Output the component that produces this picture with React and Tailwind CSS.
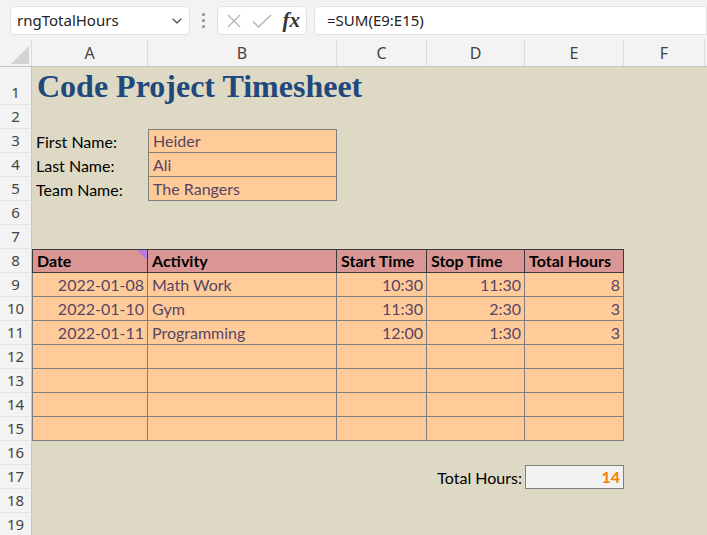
import React from "react";
import { ChevronDown } from "lucide-react";

const cellFont = { fontFamily: "Lato, 'Noto Sans', sans-serif" };

const inputCls = "bg-[#ffcc99] text-[#574563] border-r border-b border-[#7f7f7f]";
const headCls = "bg-[#da9694] text-black font-bold border-r border-b border-t border-[#3a3a3a]";

const widths = ["w-[116px]", "w-[189px]", "w-[90px]", "w-[98px]", "w-[99px]", "w-[81px]"];

// each row: [number, heightClass, cells(6)] ; cell = { t, cls, align }
const blank = () => ({});
const tableRow = (vals) => [
    { t: vals[0], cls: `${inputCls} border-l`, align: "r" },
    { t: vals[1], cls: inputCls },
    { t: vals[2], cls: inputCls, align: "r" },
    { t: vals[3], cls: inputCls, align: "r" },
    { t: vals[4], cls: inputCls, align: "r" },
    blank(),
];

const rows = [
    [1, "h-[38px]", [{ title: true }, blank(), blank(), blank(), blank(), blank()]],
    [2, "h-[24px]", [blank(), blank(), blank(), blank(), blank(), blank()]],
    [3, "h-[24px]", [{ t: "First Name:" }, { t: "Heider", cls: `${inputCls} border-l border-t` }, blank(), blank(), blank(), blank()]],
    [4, "h-[24px]", [{ t: "Last Name:" }, { t: "Ali", cls: `${inputCls} border-l` }, blank(), blank(), blank(), blank()]],
    [5, "h-[24px]", [{ t: "Team Name:" }, { t: "The Rangers", cls: `${inputCls} border-l` }, blank(), blank(), blank(), blank()]],
    [6, "h-[24px]", [blank(), blank(), blank(), blank(), blank(), blank()]],
    [7, "h-[24px]", [blank(), blank(), blank(), blank(), blank(), blank()]],
    [8, "h-[24px]", [
        { t: "Date", cls: `${headCls} border-l`, marker: true },
        { t: "Activity", cls: headCls },
        { t: "Start Time", cls: headCls },
        { t: "Stop Time", cls: headCls },
        { t: "Total Hours", cls: headCls },
        blank(),
    ]],
    [9, "h-[24px]", tableRow(["2022-01-08", "Math Work", "10:30", "11:30", "8"])],
    [10, "h-[24px]", tableRow(["2022-01-10", "Gym", "11:30", "2:30", "3"])],
    [11, "h-[24px]", tableRow(["2022-01-11", "Programming", "12:00", "1:30", "3"])],
    [12, "h-[24px]", tableRow(["", "", "", "", ""])],
    [13, "h-[24px]", tableRow(["", "", "", "", ""])],
    [14, "h-[24px]", tableRow(["", "", "", "", ""])],
    [15, "h-[24px]", tableRow(["", "", "", "", ""])],
    [16, "h-[24px]", [blank(), blank(), blank(), blank(), blank(), blank()]],
    [17, "h-[24px]", [
        blank(), blank(), blank(),
        { t: "Total Hours:", align: "r" },
        { t: "14", cls: "bg-[#f2f2f2] text-[#fa7d00] font-bold border border-[#7f7f7f]", align: "r" },
        blank(),
    ]],
    [18, "h-[24px]", [blank(), blank(), blank(), blank(), blank(), blank()]],
    [19, "h-[24px]", [blank(), blank(), blank(), blank(), blank(), blank()]],
];

const FormulaBar = () => (
    <div className="h-[39px] bg-[#f3f3f3] flex items-center pl-[10px] pt-[2px]" style={{ fontFamily: "'Noto Sans', 'Open Sans', sans-serif" }}>
        <div className="w-[180px] h-[29px] bg-white border border-[#e1e1e1] rounded-[5px] flex items-center justify-between pl-[6px] pr-[4px]">
            <span className="text-[15px] text-[#222]">rngTotalHours</span>
            <ChevronDown size={16} strokeWidth={1.6} className="text-[#444]" />
        </div>
        <div className="w-[27px] flex flex-col items-center gap-[3px]">
            <span className="w-[3px] h-[3px] rounded-full bg-[#8d8d8d]" />
            <span className="w-[3px] h-[3px] rounded-full bg-[#8d8d8d]" />
            <span className="w-[3px] h-[3px] rounded-full bg-[#8d8d8d]" />
        </div>
        <div className="w-[90px] h-[29px] bg-white border border-[#e1e1e1] rounded-[5px] flex items-center pl-[7px] pr-[6px] justify-between">
            <svg width="16" height="16" viewBox="0 0 16 16" className="ml-[1px]">
                <path d="M2 2 L14 14 M14 2 L2 14" stroke="#b3b3b3" strokeWidth="1.3" fill="none" />
            </svg>
            <svg width="20" height="16" viewBox="0 0 20 16">
                <path d="M1 8.5 L6.5 14 L19 2" stroke="#b3b3b3" strokeWidth="1.3" fill="none" />
            </svg>
            <span className="text-[21px] italic font-bold text-[#333] leading-none" style={{ fontFamily: "'Liberation Serif', serif" }}>fx</span>
        </div>
        <div className="ml-[7px] flex-1 h-[29px] bg-white border border-[#e1e1e1] rounded-l-[5px] flex items-center pl-[12px]">
            <span className="text-[15px] text-[#222]">=SUM(E9:E15)</span>
        </div>
    </div>
);

const ColumnHeaders = () => (
    <div className="flex h-[28px] bg-[#f3f3f3] border-b border-[#c6c6c6]" style={{ fontFamily: "'Noto Sans', 'Open Sans', sans-serif" }}>
        <div className="w-[32px] shrink-0 h-full border-r border-[#dcdcdc] flex items-end justify-end pr-[2px] pb-[2px]">
            <svg width="18" height="18" viewBox="0 0 18 18">
                <polygon points="18,0 18,18 0,18" fill="#d4d4d4" />
            </svg>
        </div>
        {["A", "B", "C", "D", "E", "F"].map((c, i) => (
            <div key={c} className={`${widths[i]} shrink-0 h-full border-r border-[#dcdcdc] flex items-center justify-center text-[16px] text-[#444]`}>
                {c}
            </div>
        ))}
    </div>
);

const SheetRow = ({ n, h, cells }) => (
    <div className={`flex ${h}`}>
        <div className="w-[32px] shrink-0 h-full bg-[#f3f3f3] border-r border-b border-r-[#c6c6c6] border-b-[#e3e3e3] flex items-end justify-center pb-[1px] text-[15px] text-[#444]" style={{ fontFamily: "'Noto Sans', 'Open Sans', sans-serif" }}>
            {n}
        </div>
        {cells.map((c, i) => (
            <div
                key={i}
                className={`${widths[i]} shrink-0 h-full relative flex items-end pb-[1px] text-[16px] whitespace-nowrap ${c.cls || "text-black"} ${c.align === "r" ? "justify-end pr-[3px]" : "pl-[4px]"}`}
                style={cellFont}
            >
                {c.title ? (
                    <span className="absolute left-[5px] bottom-[3px] text-[32px] font-bold text-[#1f497d] leading-none" style={{ fontFamily: "'Liberation Serif', serif" }}>
                        Code Project Timesheet
                    </span>
                ) : (
                    <span className="leading-[20px]">{c.t}</span>
                )}
                {c.marker && (
                    <svg width="10" height="10" viewBox="0 0 10 10" className="absolute top-0 right-0">
                        <path d="M0 0 L10 0 L10 10 Q5 5 0 0 Z" fill="#b57be0" />
                    </svg>
                )}
            </div>
        ))}
    </div>
);

export default function App() {
    return (
        <div className="w-[707px] h-[535px] overflow-hidden bg-[#ddd9c4]">
            <FormulaBar />
            <ColumnHeaders />
            {rows.map(([n, h, cells]) => (
                <SheetRow key={n} n={n} h={h} cells={cells} />
            ))}
        </div>
    );
}
